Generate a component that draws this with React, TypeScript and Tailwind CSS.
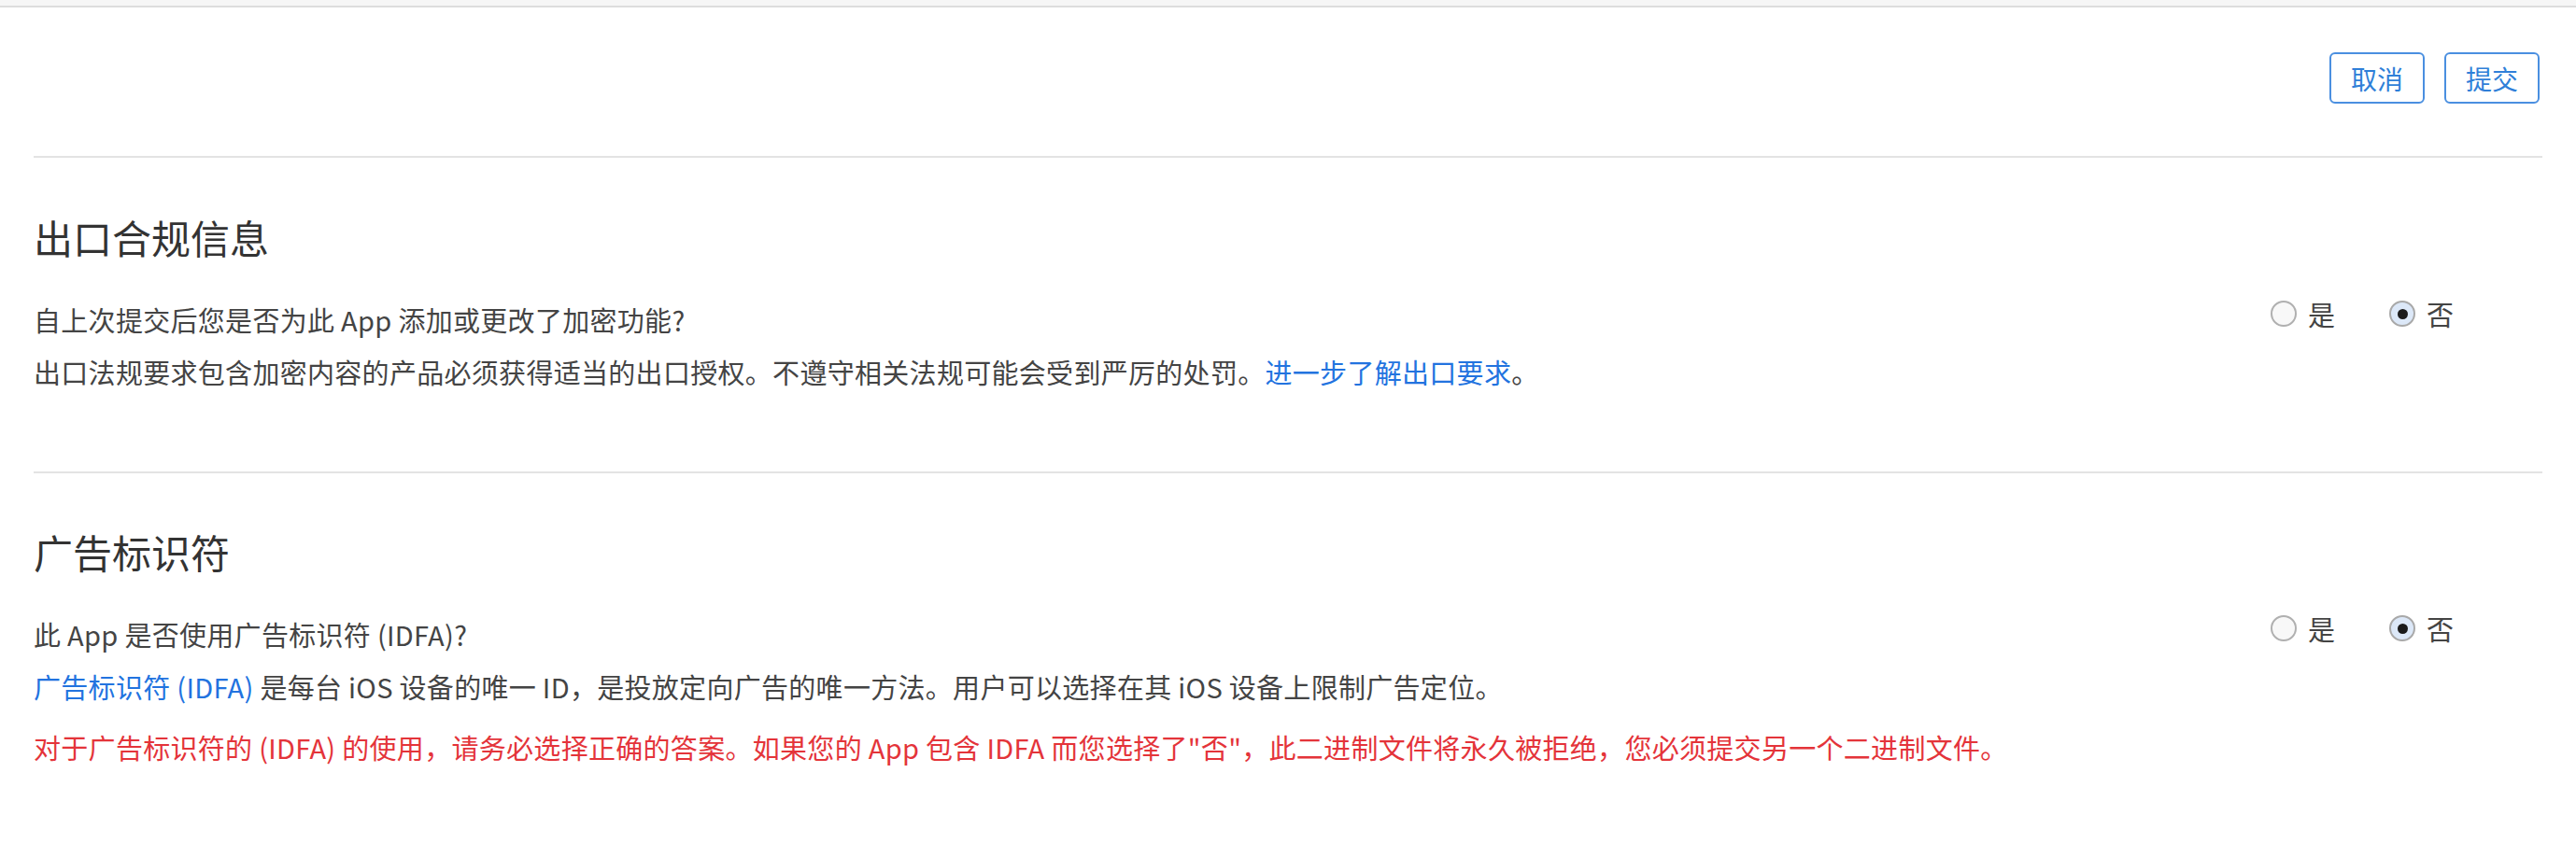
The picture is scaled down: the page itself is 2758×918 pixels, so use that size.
import React from 'react';

const Radio = ({ checked, label }: { checked?: boolean; label: string }) => (
  <label className="flex items-center gap-[12px]">
    <span
      className={
        checked
          ? 'flex h-[28px] w-[28px] items-center justify-center rounded-full border-2 border-[#a9a9a9] bg-[#dce8f8]'
          : 'h-[28px] w-[28px] rounded-full border-2 border-[#b0b0b0] bg-[#f8f8f8]'
      }
    >
      {checked && <span className="h-[11px] w-[11px] rounded-full bg-[#1b1b1b]"></span>}
    </span>
    <span className="text-[29px] leading-[44px] text-[#444]">{label}</span>
  </label>
);

const YesNo = () => (
  <div className="flex h-[44px] w-[291px] shrink-0 items-center gap-[58px]">
    <Radio label="是" />
    <Radio checked label="否" />
  </div>
);

const App = () => {
  return (
    <div
      className="min-h-screen bg-white"
      style={{ fontFamily: '"Noto Sans CJK SC", "Noto Sans", sans-serif' }}
    >
      <div className="h-[8px] border-b-2 border-[#dddddd] bg-[#f6f6f6]"></div>

      <div className="px-[36px]">
        <div className="flex justify-end gap-[21px] pr-[3px] pt-[48px] pb-[56px]">
          <button className="h-[55px] w-[102px] rounded-[6px] border-2 border-[#4a8fe0] text-[28px] leading-none text-[#2f7fd8]">
            取消
          </button>
          <button className="h-[55px] w-[102px] rounded-[6px] border-2 border-[#4a8fe0] text-[28px] leading-none text-[#2f7fd8]">
            提交
          </button>
        </div>

        <section className="border-t-2 border-[#e3e3e3] pt-[57px] pb-[79px]">
          <h2 className="text-[42px] font-normal leading-[56px] text-[#333]">出口合规信息</h2>
          <div className="mt-[32px] flex items-start justify-between">
            <div className="text-[29px] leading-[56px] tracking-[0.3px] text-[#444]">
              <p>自上次提交后您是否为此 App 添加或更改了加密功能?</p>
              <p>
                出口法规要求包含加密内容的产品必须获得适当的出口授权。不遵守相关法规可能会受到严厉的处罚。<a className="text-[#2273df]">进一步了解出口要求</a>。
              </p>
            </div>
            <YesNo />
          </div>
        </section>

        <section className="border-t-2 border-[#e3e3e3] pt-[56px] pb-[60px]">
          <h2 className="text-[42px] font-normal leading-[56px] text-[#333]">广告标识符</h2>
          <div className="mt-[32px] flex items-start justify-between">
            <div className="text-[29px] leading-[56px] tracking-[0.3px] text-[#444]">
              <p>此 App 是否使用广告标识符 (IDFA)?</p>
              <p>
                <a className="text-[#2273df]">广告标识符 (IDFA)</a>
                {' '}是每台 iOS 设备的唯一 ID，是投放定向广告的唯一方法。用户可以选择在其 iOS 设备上限制广告定位。
              </p>
              <p className="mt-[9px] text-[#e4343a]">
                对于广告标识符的 (IDFA) 的使用，请务必选择正确的答案。如果您的 App 包含 IDFA 而您选择了"否"，此二进制文件将永久被拒绝，您必须提交另一个二进制文件。
              </p>
            </div>
            <YesNo />
          </div>
        </section>
      </div>
    </div>
  );
};

export default App;
